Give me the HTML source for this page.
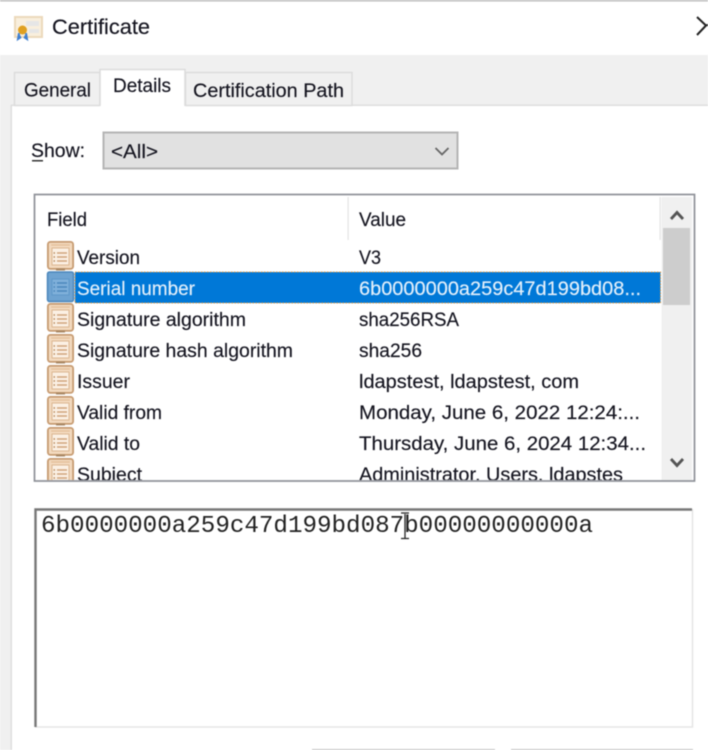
<!DOCTYPE html>
<html lang="en">
<head>
<meta charset="utf-8">
<title>Certificate</title>
<style>
html,body{margin:0;padding:0;background:#fff;width:708px;height:750px;overflow:hidden}
svg{display:block;filter:blur(0.5px)}
text{font-family:"Liberation Sans",sans-serif;font-size:19px;fill:#14141f;stroke:#14141f;stroke-width:0.15px}
.m{font-family:"Liberation Mono",monospace;font-size:24px;fill:#222;stroke:none}
.w{fill:#e4f0fb;stroke:#e4f0fb}
</style>
</head>
<body>
<svg width="708" height="750" viewBox="0 0 708 750" xmlns="http://www.w3.org/2000/svg">
<defs>
<g id="ic">
<rect x="0.900" y="0.900" width="25.200" height="27" rx="2.500" fill="#f3dabf" stroke="#c69a70" stroke-width="1.800"/>
<path d="M4 4h19" stroke="#e2bd97" stroke-width="1.200" fill="none"/>
<rect x="5" y="7" width="17" height="17" fill="#fbf0e4" stroke="#dcb690" stroke-width="1"/>
<path d="M10 12h10M10 16h10M10 20h10" stroke="#cfa47b" stroke-width="1.400" fill="none"/>
<path d="M6.500 12h1.500M6.500 16h1.500M6.500 20h1.500" stroke="#b98a5c" stroke-width="1.400" fill="none"/>
<rect x="9" y="27.500" width="9" height="2" fill="#a98763"/>
</g>
<clipPath id="lc"><rect x="35" y="196" width="658" height="284"/></clipPath>
</defs>

<rect width="708" height="750" fill="#fff"/>
<rect width="708" height="1.500" fill="#bdbdbd"/>

<!-- title -->
<rect x="15" y="17" width="27" height="20" fill="#f9efdd" stroke="#ecd9bb" stroke-width="2"/>
<rect x="26" y="21" width="13" height="5" fill="#e6e6e6"/>
<rect x="29" y="29" width="10" height="4" fill="#e6e6e6"/>
<path d="M19 33l-1 6 3-2M26 33l1 6-3-2" fill="#3f7fd0" stroke="#3f7fd0" stroke-width="2"/>
<circle cx="22.500" cy="30" r="4.500" fill="#e0a020"/>
<text x="52" y="34" textLength="98" lengthAdjust="spacingAndGlyphs" style="font-size:21px">Certificate</text>
<path d="M697 17L706 25.500L697 35M708 25L705 25.500" fill="none" stroke="#222" stroke-width="2"/>

<!-- gray band -->
<rect y="55" width="708" height="50" fill="#f0f0f0"/>
<rect y="105" width="11" height="645" fill="#f0f0f0"/>
<rect x="11" y="104.500" width="697" height="1.500" fill="#dedede"/>
<rect x="10.500" y="105" width="1.500" height="645" fill="#dedede"/>

<!-- tabs -->
<rect x="14.500" y="72.500" width="85.500" height="33" fill="#f0f0f0" stroke="#dcdcdc" stroke-width="1.500"/>
<rect x="185.500" y="72.500" width="166.500" height="33" fill="#f0f0f0" stroke="#dcdcdc" stroke-width="1.500"/>
<rect x="100" y="69.500" width="85" height="38" fill="#fff"/>
<path d="M100 106V69.500H185V106" fill="none" stroke="#dcdcdc" stroke-width="1.500"/>
<text x="24" y="96.500" textLength="67" lengthAdjust="spacingAndGlyphs">General</text>
<text x="113" y="92" textLength="58" lengthAdjust="spacingAndGlyphs">Details</text>
<text x="193" y="97" textLength="151" lengthAdjust="spacingAndGlyphs">Certification Path</text>

<!-- show -->
<text x="31" y="157" textLength="54" lengthAdjust="spacingAndGlyphs">Show:</text>
<rect x="32" y="160" width="11" height="1.500" fill="#333"/>
<rect x="103.500" y="132.500" width="354" height="36" fill="#e1e1e1" stroke="#b4b4b4" stroke-width="2"/>
<text x="111" y="158" textLength="47" lengthAdjust="spacingAndGlyphs">&lt;All&gt;</text>
<path d="M435.500 148L442 154.500L448.500 148" fill="none" stroke="#666" stroke-width="1.800"/>

<!-- list -->
<rect x="34.500" y="194.500" width="660" height="286.500" fill="#fff" stroke="#8d9097" stroke-width="1.700"/>
<text x="47" y="226" textLength="40" lengthAdjust="spacingAndGlyphs">Field</text>
<text x="359" y="226" textLength="47" lengthAdjust="spacingAndGlyphs">Value</text>
<rect x="347.500" y="197" width="1.200" height="43" fill="#e4e4e4"/>
<rect x="659.500" y="197" width="1.200" height="43" fill="#e4e4e4"/>

<!-- selection -->
<rect x="75" y="272" width="585.500" height="31" fill="#0078d7" stroke="#e59a3c" stroke-width="1" stroke-dasharray="1.500 1.500"/>

<g clip-path="url(#lc)">
<use href="#ic" x="47" y="241"/>
<use href="#ic" x="47" y="303"/>
<use href="#ic" x="47" y="334"/>
<use href="#ic" x="47" y="365"/>
<use href="#ic" x="47" y="396"/>
<use href="#ic" x="47" y="427"/>
<use href="#ic" x="47" y="458"/>

<text x="77" y="264" textLength="63" lengthAdjust="spacingAndGlyphs">Version</text>
<text x="77" y="295" textLength="118" lengthAdjust="spacingAndGlyphs" class="w">Serial number</text>
<text x="77" y="326" textLength="169" lengthAdjust="spacingAndGlyphs">Signature algorithm</text>
<text x="77" y="357" textLength="216" lengthAdjust="spacingAndGlyphs">Signature hash algorithm</text>
<text x="77" y="388" textLength="53" lengthAdjust="spacingAndGlyphs">Issuer</text>
<text x="77" y="419" textLength="85" lengthAdjust="spacingAndGlyphs">Valid from</text>
<text x="77" y="450" textLength="63" lengthAdjust="spacingAndGlyphs">Valid to</text>
<text x="77" y="481" textLength="65" lengthAdjust="spacingAndGlyphs">Subject</text>

<text x="359" y="264" textLength="22" lengthAdjust="spacingAndGlyphs">V3</text>
<text x="359" y="295" textLength="282" lengthAdjust="spacingAndGlyphs" class="w">6b0000000a259c47d199bd08...</text>
<text x="359" y="326" textLength="100" lengthAdjust="spacingAndGlyphs">sha256RSA</text>
<text x="359" y="357" textLength="63" lengthAdjust="spacingAndGlyphs">sha256</text>
<text x="359" y="388" textLength="220" lengthAdjust="spacingAndGlyphs">ldapstest, ldapstest, com</text>
<text x="359" y="419" textLength="281" lengthAdjust="spacingAndGlyphs">Monday, June 6, 2022 12:24:...</text>
<text x="359" y="450" textLength="287" lengthAdjust="spacingAndGlyphs">Thursday, June 6, 2024 12:34...</text>
<text x="359" y="481" textLength="264" lengthAdjust="spacingAndGlyphs">Administrator, Users, ldapstes</text>
</g>
<!-- selected icon -->
<rect x="47.500" y="272" width="26" height="29.500" rx="2" fill="#6ea3d1" stroke="#4a86bb" stroke-width="1.500"/>
<rect x="52" y="279" width="17" height="16" fill="#7fb0da" stroke="#5e97c8" stroke-width="1"/>
<path d="M57 283h10M57 287h10M57 291h10M53.500 283h1.500M53.500 287h1.500M53.500 291h1.500" stroke="#4a86bb" stroke-width="1.400" fill="none"/>

<!-- scrollbar -->
<rect x="661.500" y="197" width="30.500" height="283" fill="#f0f0f0"/>
<rect x="663" y="228" width="27" height="77" fill="#cdcdcd"/>
<path d="M671 219L677 212.500L683 219" fill="none" stroke="#555" stroke-width="2.800"/>
<path d="M671 459L677 465.500L683 459" fill="none" stroke="#555" stroke-width="2.800"/>

<!-- textbox -->
<rect x="35" y="509" width="657" height="217.500" fill="#fff"/>
<path d="M692.500 509V727H35" fill="none" stroke="#e6e6e6" stroke-width="1.600"/>
<path d="M35.500 727V509.500H692" fill="none" stroke="#777" stroke-width="2.400"/>
<text class="m" x="41" y="532" textLength="552" lengthAdjust="spacingAndGlyphs">6b0000000a259c47d199bd087b00000000000a</text>
<path d="M405 514V538M401 513h8M401 538.500h8" fill="none" stroke="#222" stroke-width="1.300"/>

<!-- buttons (clipped) -->
<rect x="312" y="749" width="183" height="1" fill="#c4c4c4"/>
<rect x="511" y="749" width="182" height="1" fill="#c4c4c4"/>
</svg>
</body>
</html>
